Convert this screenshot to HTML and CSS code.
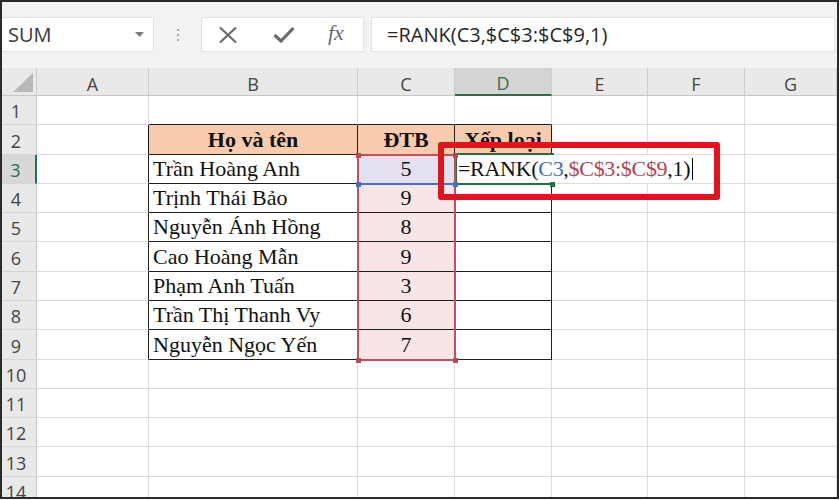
FILE: index.html
```html
<!DOCTYPE html>
<html lang="vi">

<head>
    <meta charset="UTF-8">
    <meta name="viewport" content="width=device-width, initial-scale=1.0">
    <title>Hàm RANK</title>
    <link rel="stylesheet" href="styles.css">
</head>

<body>
    <div class="frame">
        <!-- thanh công thức -->
        <div class="toolbar">
            <div class="name-box">
                <span>SUM</span>
                <svg width="9" height="5" viewBox="0 0 9 5"><polygon points="0,0 9,0 4.5,5" fill="#7c7c7c" /></svg>
            </div>
            <div class="grip"><i></i><i></i><i></i></div>
            <div class="fn-box">
                <svg class="ic-x" width="20" height="18" viewBox="0 0 20 18">
                    <path d="M2 1.5 L18 16.5 M18 1.5 L2 16.5" stroke="#6b6b6b" stroke-width="2.2" fill="none" />
                </svg>
                <svg class="ic-ok" width="22" height="17" viewBox="0 0 22 17">
                    <path d="M1.5 9 L8 15 L20.5 2" stroke="#6b6b6b" stroke-width="3.2" fill="none" />
                </svg>
                <span class="fx">fx</span>
            </div>
            <div class="formula">=RANK(C3,$C$3:$C$9,1)</div>
        </div>

        <!-- bảng tính -->
        <div class="sheet">
            <div class="corner">
                <svg width="35" height="28" viewBox="0 0 35 28"><polygon points="11,24 31,24 31,5" fill="#b8b8b8" /></svg>
            </div>
            <div class="col">A</div>
            <div class="col">B</div>
            <div class="col">C</div>
            <div class="col on">D</div>
            <div class="col">E</div>
            <div class="col">F</div>
            <div class="col">G</div>

            <div class="rh">1</div>
            <div class="c"></div><div class="c bb"></div><div class="c bb"></div><div class="c bb"></div>
            <div class="c"></div><div class="c"></div><div class="c"></div>

            <div class="rh">2</div>
            <div class="c br"></div>
            <div class="c br bb th">Họ và tên</div>
            <div class="c br bb th">ĐTB</div>
            <div class="c br bb th">Xếp loại</div>
            <div class="c"></div><div class="c"></div><div class="c"></div>

            <div class="rh on">3</div>
            <div class="c br"></div>
            <div class="c br bb nm">Trần Hoàng Anh</div>
            <div class="c br bb pt ref">5</div>
            <div class="c br bb edit"><span>=RANK(<b class="t-blue">C3</b>,<b class="t-red">$C$3:$C$9</b>,1)<i class="caret"></i></span></div>
            <div class="c"></div><div class="c"></div><div class="c"></div>

            <div class="rh">4</div>
            <div class="c br"></div>
            <div class="c br bb nm">Trịnh Thái Bảo</div>
            <div class="c br bb pt">9</div>
            <div class="c br bb"></div>
            <div class="c"></div><div class="c"></div><div class="c"></div>

            <div class="rh">5</div>
            <div class="c br"></div>
            <div class="c br bb nm">Nguyễn Ánh Hồng</div>
            <div class="c br bb pt">8</div>
            <div class="c br bb"></div>
            <div class="c"></div><div class="c"></div><div class="c"></div>

            <div class="rh">6</div>
            <div class="c br"></div>
            <div class="c br bb nm">Cao Hoàng Mẫn</div>
            <div class="c br bb pt">9</div>
            <div class="c br bb"></div>
            <div class="c"></div><div class="c"></div><div class="c"></div>

            <div class="rh">7</div>
            <div class="c br"></div>
            <div class="c br bb nm">Phạm Anh Tuấn</div>
            <div class="c br bb pt">3</div>
            <div class="c br bb"></div>
            <div class="c"></div><div class="c"></div><div class="c"></div>

            <div class="rh">8</div>
            <div class="c br"></div>
            <div class="c br bb nm">Trần Thị Thanh Vy</div>
            <div class="c br bb pt">6</div>
            <div class="c br bb"></div>
            <div class="c"></div><div class="c"></div><div class="c"></div>

            <div class="rh">9</div>
            <div class="c br"></div>
            <div class="c br bb nm">Nguyễn Ngọc Yến</div>
            <div class="c br bb pt">7</div>
            <div class="c br bb"></div>
            <div class="c"></div><div class="c"></div><div class="c"></div>

            <div class="rh">10</div>
            <div class="c"></div><div class="c"></div><div class="c"></div><div class="c"></div>
            <div class="c"></div><div class="c"></div><div class="c"></div>

            <div class="rh">11</div>
            <div class="c"></div><div class="c"></div><div class="c"></div><div class="c"></div>
            <div class="c"></div><div class="c"></div><div class="c"></div>

            <div class="rh">12</div>
            <div class="c"></div><div class="c"></div><div class="c"></div><div class="c"></div>
            <div class="c"></div><div class="c"></div><div class="c"></div>

            <div class="rh">13</div>
            <div class="c"></div><div class="c"></div><div class="c"></div><div class="c"></div>
            <div class="c"></div><div class="c"></div><div class="c"></div>

            <div class="rh">14</div>
            <div class="c"></div><div class="c"></div><div class="c"></div><div class="c"></div>
            <div class="c"></div><div class="c"></div><div class="c"></div>

            <!-- vùng chọn và ô đang sửa -->
            <div class="active"></div>
            <div class="range"></div>
            <div class="ref-line"></div>
            <div class="dot red h-tl"></div>
            <div class="dot red h-tr"></div>
            <div class="dot red h-bl"></div>
            <div class="dot red h-br"></div>
            <div class="dot blue h-c3l"></div>
            <div class="dot blue h-c3r"></div>
            <div class="dot green h-d3"></div>
            <div class="mark"></div>
        </div>
    </div>
</body>

</html>
```

FILE: styles.css
```css
* {
    box-sizing: border-box;
}

body {
    margin: 0;
    background-color: #fff;
    font-family: "Open Sans", "Noto Sans", sans-serif;
}

.frame {
    width: 839px;
    height: 499px;
    border: 2px solid #2a2a2a;
    overflow: hidden;
    background-color: #fff;
}

/* thanh công thức */
.toolbar {
    height: 66px;
    padding-top: 15px;
    padding-right: 2px;
    display: flex;
    align-items: flex-start;
    background-color: #f2f2f2;
}

.name-box {
    width: 152px;
    height: 35px;
    padding: 0 9px 0 6px;
    display: flex;
    align-items: center;
    justify-content: space-between;
    background-color: #fff;
    border: 1px solid #e3e3e3;
    border-left: none;
    font-size: 20px;
    color: #383838;
}

.grip {
    width: 47px;
    height: 35px;
    display: flex;
    flex-direction: column;
    align-items: center;
    justify-content: center;
    gap: 3px;
}

.grip i {
    width: 2px;
    height: 2px;
    background-color: #a9a9a9;
}

.fn-box {
    width: 163px;
    height: 35px;
    padding-left: 16px;
    display: flex;
    align-items: center;
    background-color: #fff;
    border: 1px solid #e3e3e3;
}

.fn-box .ic-ok {
    margin-left: 35px;
}

.fn-box .fx {
    margin-left: 33px;
    margin-top: -3px;
    font-family: "Liberation Serif", serif;
    font-style: italic;
    font-size: 22px;
    color: #6b6b6b;
}

.formula {
    flex: 1;
    height: 35px;
    margin-left: 7px;
    padding-left: 15px;
    display: flex;
    align-items: center;
    background-color: #fff;
    border: 1px solid #e3e3e3;
    font-size: 20px;
    color: #262626;
}

/* bảng tính */
.sheet {
    position: relative;
    display: grid;
    grid-template-columns: 35px 112px 209px 97px 97px 96px 97px 1fr;
    grid-template-rows: 28px 29px 30px 29px 29px 29px 30px 29px 29px 30px 29px 29px 29px 30px 29px;
}

.corner {
    background-color: #e9e9e9;
    border-right: 1px solid #cdcdcd;
    border-bottom: 1px solid #c6c6c6;
}

.corner svg {
    display: block;
}

.col {
    padding-top: 4px;
    display: flex;
    align-items: center;
    justify-content: center;
    background-color: #e9e9e9;
    border-right: 1px solid #cdcdcd;
    border-bottom: 1px solid #c6c6c6;
    font-size: 18px;
    color: #444;
}

.col.on {
    background-color: #d4d4d4;
    border-bottom: 2px solid #217346;
    color: #3a6b4c;
}

.rh {
    padding: 2px 6px 0 0;
    display: flex;
    align-items: center;
    justify-content: center;
    background-color: #e9e9e9;
    border-right: 1px solid #c6c6c6;
    border-bottom: 1px solid #d6d6d6;
    font-size: 18px;
    color: #444;
}

.rh.on {
    background-color: #d8d8d8;
    border-right: 2px solid #217346;
    color: #217346;
}

.c {
    display: flex;
    align-items: center;
    white-space: nowrap;
    border-right: 1px solid #dcdcdc;
    border-bottom: 1px solid #dcdcdc;
    font-family: "Liberation Serif", "Times New Roman", serif;
    font-size: 22px;
    color: #111;
}

.c.bb {
    border-bottom-color: #1e1e1e;
}

.c.br {
    border-right-color: #1e1e1e;
}

.th {
    justify-content: center;
    background-color: #f8cbad;
    font-weight: bold;
}

.nm {
    padding-left: 4px;
}

.pt {
    justify-content: center;
    background-color: #f8e6e7;
}

.pt.ref {
    background-color: #e3e0ef;
}

/* ô D3 đang nhập công thức, chữ tràn sang E3, F3 */
.edit span {
    position: relative;
    z-index: 2;
    height: 28px;
    padding: 0 4px 0 3px;
    display: flex;
    align-items: center;
    background-color: #fff;
    letter-spacing: -0.3px;
}

.edit b {
    font-weight: normal;
}

.t-blue {
    color: #3c6eb4;
}

.t-red {
    color: #b4434f;
}

.caret {
    width: 1px;
    height: 22px;
    margin-left: 2px;
    background-color: #000;
}

/* khung chọn */
.active {
    position: absolute;
    left: 453px;
    top: 85px;
    width: 99px;
    height: 32px;
    border: 2px solid #217346;
    border-right: none;
    z-index: 3;
}

.range {
    position: absolute;
    left: 355px;
    top: 86px;
    width: 99px;
    height: 207px;
    border: 2px solid #c0505e;
    z-index: 4;
}

.ref-line {
    position: absolute;
    left: 356px;
    top: 115px;
    width: 98px;
    height: 2px;
    background-color: #4a6fc6;
    z-index: 4;
}

.dot {
    position: absolute;
    width: 5px;
    height: 5px;
    margin: -2px 0 0 -2px;
    z-index: 5;
}

.dot.red {
    background-color: #b84a58;
}

.dot.blue {
    background-color: #4a6fc6;
}

.dot.green {
    background-color: #217346;
}

.h-tl { left: 356px; top: 87px; }
.h-tr { left: 453px; top: 87px; }
.h-bl { left: 356px; top: 292px; }
.h-br { left: 453px; top: 292px; }
.h-c3l { left: 356px; top: 116px; }
.h-c3r { left: 453px; top: 116px; }
.h-d3 { left: 550px; top: 116px; }

/* khung đỏ đánh dấu */
.mark {
    position: absolute;
    left: 436px;
    top: 74px;
    width: 282px;
    height: 58px;
    border: 6px solid #e3131b;
    border-radius: 3px;
    z-index: 6;
}
```
